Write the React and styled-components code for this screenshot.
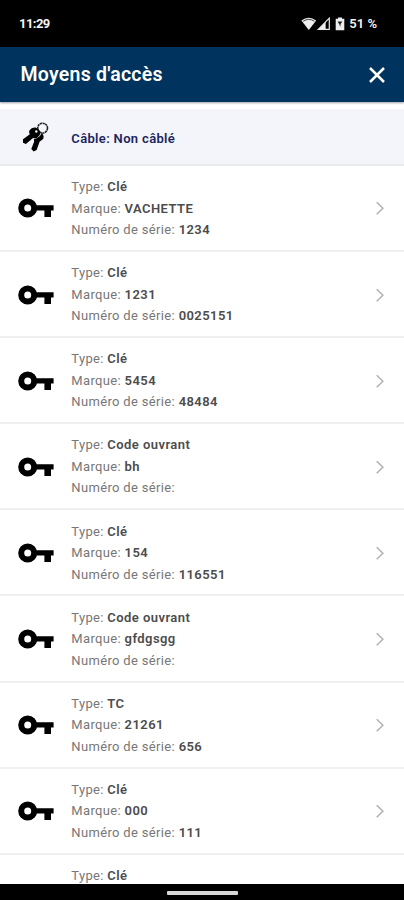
import React from "react";
import styled, { createGlobalStyle } from "styled-components";

const GlobalStyle = createGlobalStyle`
  * { box-sizing: border-box; }
  body { margin: 0; background: #fff; font-family: Roboto, "Liberation Sans", sans-serif; }
`;

const Screen = styled.div`
  width: 404px;
  height: 900px;
  display: flex;
  flex-direction: column;
  overflow: hidden;
  background: #fff;
`;

const StatusBar = styled.div`
  flex: none;
  height: 46.5px;
  padding: 2px 27px 0 19px;
  display: flex;
  align-items: center;
  justify-content: space-between;
  background: #000;
  color: #f4f4f4;
`;

const Clock = styled.span`
  font: 700 13px/16px Roboto, sans-serif;
  letter-spacing: -0.55px;
`;

const StatusIcons = styled.div`
  display: flex;
  align-items: center;
`;

const Battery = styled.span`
  margin-left: 2px;
  font: 600 13px/16px Roboto, sans-serif;
  letter-spacing: 0;
`;

const Header = styled.header`
  flex: none;
  height: 55px;
  padding: 1px 18px 0 20.5px;
  display: flex;
  align-items: center;
  justify-content: space-between;
  background: #00335d;
  box-shadow: 0 1px 2px rgba(30, 35, 60, 0.45);
  color: #fff;
`;

const Title = styled.h1`
  margin: 0;
  font: 600 19.5px/24px Roboto, sans-serif;
  letter-spacing: 0.25px;
`;

const CloseButton = styled.button`
  display: flex;
  padding: 0;
  border: 0;
  background: none;
  color: inherit;
`;

const Content = styled.main`
  flex: 1;
  min-height: 0;
  padding-top: 7.5px;
  overflow: hidden;
`;

const CableRow = styled.div`
  height: 57px;
  padding-left: 18px;
  display: grid;
  grid-template-columns: 53.3px 1fr;
  align-items: center;
  background: #f3f5fa;
  border-bottom: 2px solid #e9eaee;
`;

const CableLabel = styled.span`
  padding-top: 4px;
  font: 600 13px/20px Roboto, sans-serif;
  letter-spacing: 0.34px;
  color: #1c2560;
`;

const AccessRow = styled.div`
  height: 86.1px;
  padding: 0.8px 18px 0;
  display: grid;
  grid-template-columns: 53.3px 1fr 12px;
  align-items: center;
  border-bottom: 2px solid #efefef;
`;

const PartialRow = styled.div`
  padding: 10.5px 18px 0 71.3px;
`;

const Details = styled.div`
  display: flex;
  flex-direction: column;
`;

const Line = styled.div`
  font: 400 13px/21.5px Roboto, sans-serif;
  letter-spacing: 0.34px;
  color: #777;
  white-space: pre;
`;

const Value = styled.span`
  font-weight: 600;
  letter-spacing: 0.44px;
  color: #4c4c4c;
`;

const NavBar = styled.div`
  flex: none;
  height: 16px;
  padding-top: 2px;
  display: flex;
  align-items: center;
  justify-content: center;
  background: #000;
`;

const HomeHandle = styled.div`
  width: 71px;
  height: 3.5px;
  border-radius: 1px;
  background: #d8d8d8;
`;

const WifiIcon = () => (
  <svg width="16" height="14" viewBox="0 0 16 14">
    <path d="M.4 3.6Q7.7-2.2 15.2 3.6L7.8 13Z" fill="#eee" />
    <path d="M2.2 4.2Q7.8.6 13.4 4.2" fill="none" stroke="#444" strokeWidth="1" />
  </svg>
);

const SignalIcon = () => (
  <svg width="16" height="14" viewBox="0 0 16 14">
    <path d="M1.3 12.4 12.3 1.2V12.4Z" fill="none" stroke="#e8e8e8" strokeWidth="1.2" />
    <path d="M1 12.8 8.6 5V12.8Z" fill="#eee" />
  </svg>
);

const BatteryIcon = () => (
  <svg width="14" height="14" viewBox="0 0 14 14">
    <path d="M5 .4h4v1.4h2.3v11.4H2.7V1.8H5Z" fill="#eee" />
    <path d="M4.6 4.5h4.8L7.6 7.1 7.3 10 6.4 7.5Z" fill="#222" />
  </svg>
);

const CloseIcon = () => (
  <svg width="18" height="18" viewBox="0 0 18 18">
    <path d="M2 2 16 16M16 2 2 16" stroke="currentColor" strokeWidth="2.5" />
  </svg>
);

const KeyRingIcon = () => (
  <svg width="36" height="32" viewBox="0 0 36 32">
    <circle cx="24.6" cy="7.1" r="4.9" fill="none" stroke="#252525" strokeWidth="1.6" strokeDasharray="2.3 .5" />
    <path d="M11.4 9.6Q13.8 5.8 17.6 6.5L20.8 8.5Q23.1 11.3 21.6 14.2 18.9 18.2 15 17L7.9 22.9 5 21.8V18.2L11.8 13.2Q10.6 11.2 11.4 9.6Z" fill="#000" />
    <circle cx="18.3" cy="10.5" r="1.2" fill="#f3f5fa" />
    <path d="M23.8 11.8Q26.6 15.1 25.1 18L21.6 20.8 18.6 28.9 15.7 30.5 13.3 28 16.2 20.4 15.8 18.2 19.1 17Q22.4 15.8 23.8 11.8Z" fill="#000" />
  </svg>
);

const KeyIcon = () => (
  <svg width="36" height="20" viewBox="0 0 36 20">
    <circle cx="9.7" cy="10" r="6.5" fill="none" stroke="#000" strokeWidth="6" />
    <path d="M17 7.2h18.6v5.4H33v6.5h-6.6v-6.5H17Z" fill="#000" />
  </svg>
);

const ChevronIcon = () => (
  <svg width="12" height="16" viewBox="0 0 12 16">
    <path d="M2.7 2.2 8.9 8.3 2.7 14.3" fill="none" stroke="#b2b2b2" strokeWidth="1.5" />
  </svg>
);

const items = [
  ["Clé", "VACHETTE", "1234"],
  ["Clé", "1231", "0025151"],
  ["Clé", "5454", "48484"],
  ["Code ouvrant", "bh", ""],
  ["Clé", "154", "116551"],
  ["Code ouvrant", "gfdgsgg", ""],
  ["TC", "21261", "656"],
  ["Clé", "000", "111"],
];

export default function App() {
  return (
    <Screen>
      <GlobalStyle />
      <StatusBar>
        <Clock>11:29</Clock>
        <StatusIcons>
          <WifiIcon />
          <SignalIcon />
          <BatteryIcon />
          <Battery>51 %</Battery>
        </StatusIcons>
      </StatusBar>
      <Header>
        <Title>Moyens d'accès</Title>
        <CloseButton aria-label="Fermer"><CloseIcon /></CloseButton>
      </Header>
      <Content>
        <CableRow>
          <KeyRingIcon />
          <CableLabel>Câble: Non câblé</CableLabel>
        </CableRow>
        {items.map(([type, brand, serial], i) => (
          <AccessRow key={i}>
            <KeyIcon />
            <Details>
              <Line>Type: <Value>{type}</Value></Line>
              <Line>Marque: <Value>{brand}</Value></Line>
              <Line>Numéro de série: <Value>{serial}</Value></Line>
            </Details>
            <ChevronIcon />
          </AccessRow>
        ))}
        <PartialRow>
          <Line>Type: <Value>Clé</Value></Line>
        </PartialRow>
      </Content>
      <NavBar><HomeHandle /></NavBar>
    </Screen>
  );
}
